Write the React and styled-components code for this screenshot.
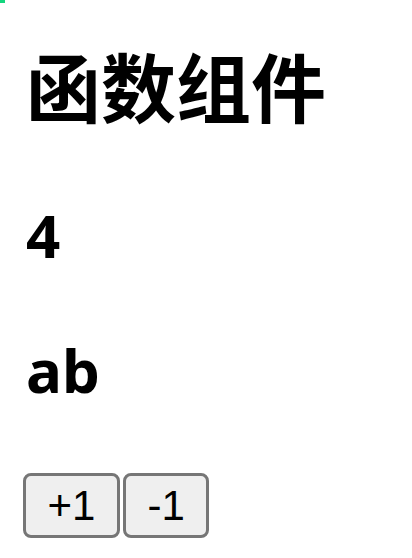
import React, { useState } from "react";
import styled, { createGlobalStyle } from "styled-components";

const GlobalStyle = createGlobalStyle`
  body {
    margin: 0;
    background: #ffffff;
    color: #000000;
    font-family: "Noto Sans", "Noto Sans CJK SC", sans-serif;
  }
`;

const Corner = styled.div`
  width: 5px;
  height: 3px;
  background: #14d67e;
`;

const Page = styled.div`
  display: flex;
  flex-direction: column;
  align-items: flex-start;
  padding: 44px 25px 0 26px;
`;

const Title = styled.h1`
  margin: 0 0 83px;
  font-family: "Noto Sans CJK SC", sans-serif;
  font-size: 75px;
  font-weight: 700;
  line-height: 75px;
`;

const Value = styled.h2`
  margin: 0 0 ${(p) => p.$gap}px;
  font-family: "Noto Sans", "Noto Sans CJK SC", sans-serif;
  font-size: 60px;
  font-weight: 700;
  line-height: 60px;
`;

const ButtonRow = styled.div`
  display: flex;
  gap: 3px;
  margin-left: -3px;
`;

const Button = styled.button`
  height: 65px;
  padding: 0 21.5px;
  border: 3px solid #767676;
  border-radius: 8px;
  background: #efefef;
  color: #000000;
  font-family: "Liberation Sans", Arial, sans-serif;
  font-size: 42px;
  line-height: 1;
`;

export default function App() {
  const [count, setCount] = useState(4);
  const [text] = useState("ab");

  return (
    <>
      <GlobalStyle />
      <Corner />
      <Page>
        <Title>函数组件</Title>
        <Value $gap={75}>{count}</Value>
        <Value $gap={73}>{text}</Value>
        <ButtonRow>
          <Button onClick={() => setCount(count + 1)}>+1</Button>
          <Button onClick={() => setCount(count - 1)}>-1</Button>
        </ButtonRow>
      </Page>
    </>
  );
}
